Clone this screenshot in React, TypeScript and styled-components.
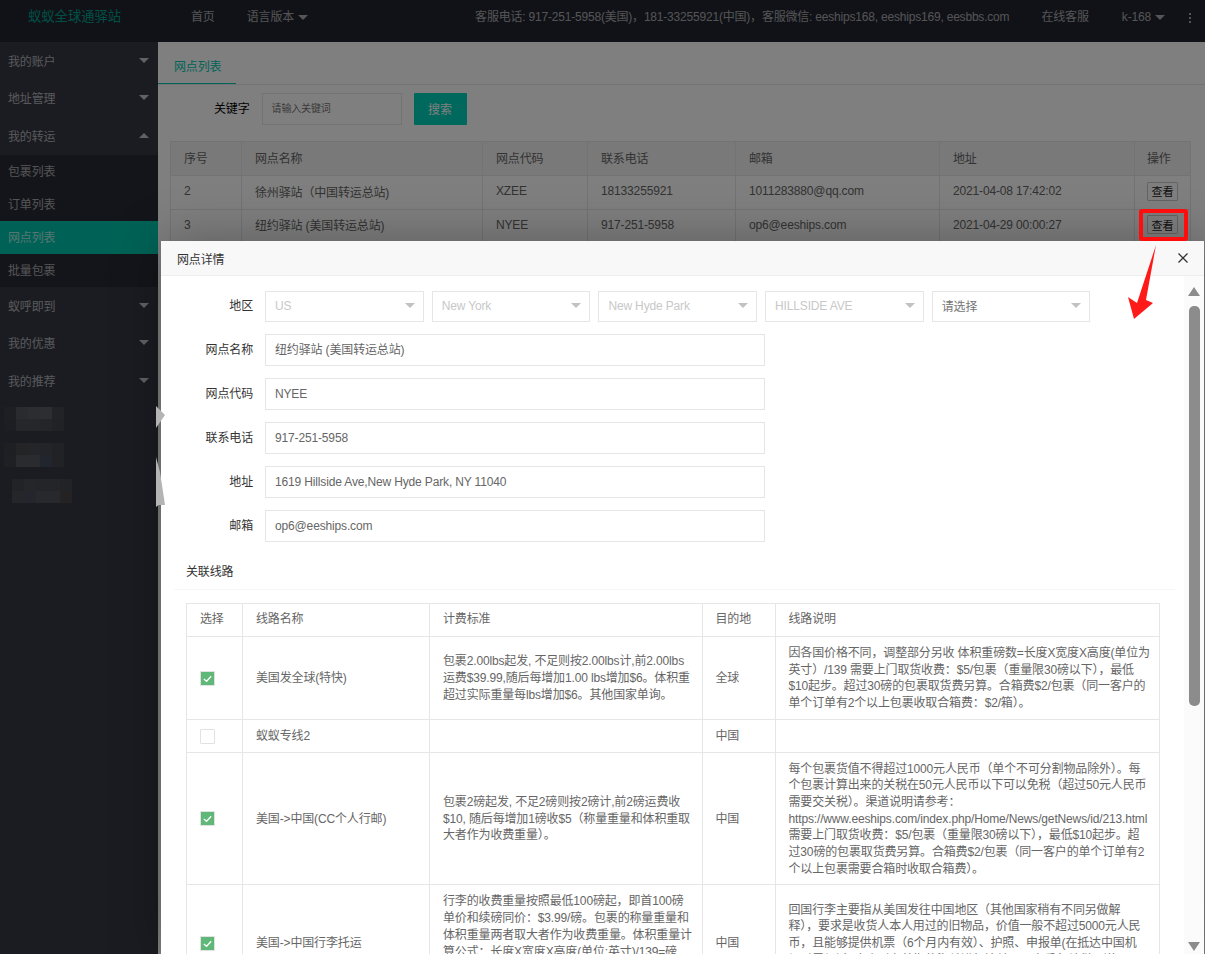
import React from "react";
import styled, { createGlobalStyle } from "styled-components";

const GlobalStyle = createGlobalStyle`
  html, body {
    margin: 0;
    padding: 0;
    background: #fff;
  }
  body {
    font-family: "Liberation Sans", "Noto Sans CJK SC", sans-serif;
    font-size: 12px;
    letter-spacing: -0.15px;
    color: #666;
  }
  * {
    box-sizing: border-box;
  }
`;

const Page = styled.div`
  position: relative;
  width: 1205px;
  height: 954px;
  overflow: hidden;
  background: #fff;
`;

const TopBar = styled.header`
  display: flex;
  align-items: flex-start;
  height: 42px;
  background: #22242e;
  color: #fff;
  line-height: 33px;
  white-space: nowrap;
`;

const Logo = styled.div`
  margin-left: 28px;
  width: 93px;
  font-size: 13.3px;
  letter-spacing: 0;
  color: #00a08e;
`;

const NavLink = styled.a<{ $left?: number }>`
  display: flex;
  align-items: center;
  height: 34px;
  margin-left: ${(p) => p.$left ?? 0}px;
  color: rgba(255, 255, 255, 0.62);
`;

const ContactText = styled(NavLink)`
  letter-spacing: -0.2px;
`;

const Caret = styled.i<{ $up?: boolean; $light?: boolean }>`
  display: inline-block;
  width: 0;
  height: 0;
  margin-left: 4px;
  border-left: 5px solid transparent;
  border-right: 5px solid transparent;
  ${(p) => (p.$up ? "border-bottom" : "border-top")}: 5px solid rgba(255, 255, 255, ${(p) => (p.$light ? 0.62 : 0.7)});
`;

const Dots = styled.div`
  display: flex;
  flex-direction: column;
  gap: 2px;
  margin: 13px 0 0 24px;
  i {
    width: 2px;
    height: 2px;
    background: rgba(255, 255, 255, 0.6);
  }
`;

const Layout = styled.div`
  display: flex;
  height: 912px;
`;

const Sidebar = styled.aside`
  width: 158px;
  flex: none;
  background: #373944;
  color: rgba(255, 255, 255, 0.62);
`;

const MenuItem = styled.div`
  display: flex;
  align-items: center;
  justify-content: space-between;
  height: 38px;
  padding: 0 9px 2px 8px;
  margin-bottom: -0.3px;
`;

const SubMenu = styled.div`
  background: #292a34;
`;

const SubItem = styled.div<{ $active?: boolean }>`
  display: flex;
  align-items: center;
  height: 33px;
  padding: 0 0 2px 8px;
  background: ${(p) => (p.$active ? "#00c4ac" : "transparent")};
  color: ${(p) => (p.$active ? "rgba(255,255,255,.7)" : "rgba(255,255,255,.6)")};
`;

const MosaicGroup = styled.div`
  display: flex;
  flex-direction: column;
  gap: 12px;
  margin-top: 7px;
`;

const Mosaic = styled.div<{ $left: number }>`
  display: grid;
  grid-template-columns: repeat(5, 12px);
  grid-auto-rows: 12px;
  margin-left: ${(p) => p.$left}px;
`;

const Cell = styled.div<{ $c: string }>`
  background: ${(p) => p.$c};
`;

const Main = styled.main`
  flex: 1;
  min-width: 0;
`;

const TabBar = styled.div`
  display: flex;
  height: 43px;
  border-bottom: 1px solid #e6e6e6;
`;

const Tab = styled.div`
  width: 78px;
  height: 42px;
  padding-left: 16px;
  line-height: 50px;
  color: #00c8b0;
  border-bottom: 1px solid #00c8b0;
`;

const SearchRow = styled.div`
  display: flex;
  align-items: center;
  gap: 12px;
  margin-top: 8px;
  padding-left: 56px;
`;

const SearchLabel = styled.label`
  padding-bottom: 3px;
  color: #000;
`;

const SearchInput = styled.div`
  width: 140px;
  height: 32px;
  padding-left: 9px;
  border: 1px solid #e6e6e6;
  background: #fff;
  font-size: 10px;
  line-height: 29px;
  color: #757575;
`;

const SearchButton = styled.button`
  width: 53px;
  height: 32px;
  padding: 0 0 2px;
  border: 0;
  border-radius: 1px;
  background: #00d0b8;
  color: #fff;
  font: inherit;
`;

const SiteTable = styled.table`
  width: 1020px;
  margin: 16px 0 0 12px;
  border-collapse: collapse;
  table-layout: fixed;
  color: #666;
  th,
  td {
    height: 33.5px;
    padding: 0 13px 2px;
    border: 1px solid #e6e6e6;
    text-align: left;
    font-weight: 400;
    white-space: nowrap;
  }
  th {
    height: 34px;
    background: #f2f2f2;
  }
  td:last-child,
  th:last-child {
    padding-left: 12px;
  }
`;

const ViewButton = styled.button`
  display: block;
  width: 31px;
  height: 19px;
  padding: 0;
  border: 1px solid #c9c9c9;
  border-radius: 1px;
  background: #fff;
  color: #222;
  font: inherit;
  font-size: 11px;
`;

const Overlay = styled.div`
  position: absolute;
  inset: 0;
  background: rgba(0, 0, 0, 0.5);
`;

const Modal = styled.section`
  position: absolute;
  left: 161px;
  top: 241px;
  right: 1px;
  bottom: 0;
  display: flex;
  flex-direction: column;
  overflow: hidden;
  background: #fff;
  box-shadow: 1px 1px 50px rgba(0, 0, 0, 0.3);
`;

const ModalHead = styled.div`
  display: flex;
  align-items: center;
  justify-content: space-between;
  flex: none;
  height: 35px;
  padding: 0 15px 0 16px;
  background: #f8f8f8;
  border-bottom: 1px solid #eee;
  color: #333;
`;

const CloseIcon = styled.svg`
  width: 12px;
  height: 12px;
  stroke: #333;
  stroke-width: 1.3;
  fill: none;
`;

const ModalBody = styled.div`
  display: flex;
  flex: 1;
  min-height: 0;
`;

const ModalContent = styled.div`
  flex: 1;
  min-width: 0;
  overflow: hidden;
  padding-top: 14px;
`;

const FormRow = styled.div`
  display: flex;
  align-items: center;
  height: 32px;
  margin-bottom: 12px;
`;

const FormLabel = styled.label`
  width: 92px;
  margin-right: 12px;
  padding-bottom: 3px;
  text-align: right;
  color: #333;
`;

const TextField = styled.div`
  width: 500px;
  height: 32px;
  padding-left: 9px;
  border: 1px solid #e6e6e6;
  line-height: 30px;
  color: #666;
  white-space: nowrap;
`;

const SelectGroup = styled.div`
  display: flex;
  gap: 8.2px;
`;

const SelectBox = styled.div<{ $disabled?: boolean }>`
  display: flex;
  align-items: center;
  justify-content: space-between;
  width: 158.5px;
  height: 31px;
  padding: 0 8px 1px 9px;
  border: 1px solid #e6e6e6;
  color: ${(p) => (p.$disabled ? "#c8c8c8" : "#757575")};
  white-space: nowrap;
`;

const SelectArrow = styled.i`
  width: 0;
  height: 0;
  border-left: 5px solid transparent;
  border-right: 5px solid transparent;
  border-top: 5px solid #c2c2c2;
`;

const SectionTitle = styled.div`
  width: 1001px;
  height: 29px;
  margin: 19px 0 0 13px;
  padding-left: 12px;
  border-bottom: 1px solid #f6f6f6;
  line-height: 23px;
  color: #333;
`;

const RouteTable = styled.table`
  width: 972.5px;
  margin: 13px 0 0 25px;
  border-collapse: collapse;
  table-layout: fixed;
  color: #666;
  line-height: 16.7px;
  th,
  td {
    padding: 8px 13px 7px;
    border: 1px solid #e6e6e6;
    text-align: left;
    font-weight: 400;
    vertical-align: middle;
    white-space: nowrap;
  }
  th {
    height: 33px;
    padding: 0 13px 1px;
  }
`;

const Check = styled.div<{ $on?: boolean }>`
  display: flex;
  align-items: center;
  justify-content: center;
  width: 15px;
  height: 15px;
  border: 1px solid #e2e2e2;
  border-radius: 1px;
  background: ${(p) => (p.$on ? "#5fb878" : "#fff")};
  svg {
    width: 11px;
    height: 11px;
    fill: none;
    stroke: #fff;
    stroke-width: 1.4;
  }
`;

const Scrollbar = styled.div`
  display: flex;
  flex-direction: column;
  align-items: center;
  flex: none;
  width: 20px;
  padding-top: 11px;
  background: #fbfbfb;
`;

const ScrollArrow = styled.i<{ $down?: boolean }>`
  flex: none;
  width: 0;
  height: 0;
  border-left: 6px solid transparent;
  border-right: 6px solid transparent;
  ${(p) => (p.$down ? "border-top" : "border-bottom")}: 9px solid #8c8c8c;
  margin-top: ${(p) => (p.$down ? "auto" : "0")};
  margin-bottom: ${(p) => (p.$down ? "3px" : "0")};
`;

const ScrollThumb = styled.div`
  flex: none;
  width: 11px;
  height: 400px;
  margin-top: 10px;
  border-radius: 5px;
  background: #8c8c8c;
`;

const Highlight = styled.div`
  position: absolute;
  left: 1139px;
  top: 209px;
  width: 49px;
  height: 32px;
  border: 4px solid #ff0d0d;
  border-radius: 3px;
`;

const Annotation = styled.svg`
  position: absolute;
  left: 0;
  top: 0;
  width: 1205px;
  height: 954px;
  pointer-events: none;
`;

const sites = [
  { id: "2", name: "徐州驿站（中国转运总站)", code: "XZEE", tel: "18133255921", mail: "1011283880@qq.com", time: "2021-04-08 17:42:02" },
  { id: "3", name: "纽约驿站 (美国转运总站)", code: "NYEE", tel: "917-251-5958", mail: "op6@eeships.com", time: "2021-04-29 00:00:27" },
];

const fields = [
  ["网点名称", "纽约驿站 (美国转运总站)"],
  ["网点代码", "NYEE"],
  ["联系电话", "917-251-5958"],
  ["地址", "1619 Hillside Ave,New Hyde Park, NY 11040"],
  ["邮箱", "op6@eeships.com"],
];

const routes = [
  {
    on: true,
    name: "美国发全球(特快)",
    fee: ["包裹2.00lbs起发, 不足则按2.00lbs计,前2.00lbs", "运费$39.99,随后每增加1.00 lbs增加$6。体积重", "超过实际重量每lbs增加$6。其他国家单询。"],
    dest: "全球",
    desc: [
      "因各国价格不同，调整部分另收 体积重磅数=长度X宽度X高度(单位为",
      "英寸）/139 需要上门取货收费：$5/包裹（重量限30磅以下），最低",
      "$10起步。超过30磅的包裹取货费另算。合箱费$2/包裹（同一客户的",
      "单个订单有2个以上包裹收取合箱费：$2/箱）。",
    ],
  },
  { on: false, name: "蚁蚁专线2", fee: [], dest: "中国", desc: [] },
  {
    on: true,
    name: "美国->中国(CC个人行邮)",
    fee: ["包裹2磅起发, 不足2磅则按2磅计,前2磅运费收", "$10, 随后每增加1磅收$5（称量重量和体积重取", "大者作为收费重量）。"],
    dest: "中国",
    desc: [
      "每个包裹货值不得超过1000元人民币（单个不可分割物品除外）。每",
      "个包裹计算出来的关税在50元人民币以下可以免税（超过50元人民币",
      "需要交关税）。渠道说明请参考：",
      "https://www.eeships.com/index.php/Home/News/getNews/id/213.html",
      "需要上门取货收费：$5/包裹（重量限30磅以下），最低$10起步。超",
      "过30磅的包裹取货费另算。合箱费$2/包裹（同一客户的单个订单有2",
      "个以上包裹需要合箱时收取合箱费）。",
    ],
  },
  {
    on: true,
    name: "美国->中国行李托运",
    fee: [
      "行李的收费重量按照最低100磅起，即首100磅",
      "单价和续磅同价：$3.99/磅。包裹的称量重量和",
      "体积重量两者取大者作为收费重量。体积重量计",
      "算公式：长度X宽度X高度(单位:英寸)/139=磅",
      "需要上门取货收费：$5/包裹，最低$10起步。",
      "超过30磅的包裹取货费另算。",
    ],
    dest: "中国",
    desc: [
      "回国行李主要指从美国发往中国地区（其他国家稍有不同另做解",
      "释），要求是收货人本人用过的旧物品，价值一般不超过5000元人民",
      "币，且能够提供机票（6个月内有效）、护照、申报单(在抵达中国机",
      "场时需经过2个小时有效期的海关进行清关即可享受免关税，详",
      "情请咨询客服。",
    ],
  },
];

const mosaics = [
  { left: 4, cells: ["#3c3e46", "#54565d", "#585a61", "#5a5c63", "#44464e", "#3a3c44", "#4c4e55", "#4c4e55", "#484a51", "#42444c"] },
  { left: 4, cells: ["#3d3f47", "#48494f", "#484a52", "#46484f", "#42444c", "#3f4149", "#55575d", "#55575d", "#434a5a", "#42444c"] },
  { left: 12, cells: ["#44464d", "#4a4c53", "#484a50", "#484a50", "#44464d", "#4a4c54", "#4a4d5b", "#50525a", "#50525a", "#4a4446"] },
];

const Lines = ({ items }: { items: string[] }) => (
  <>
    {items.map((line) => (
      <div key={line}>{line}</div>
    ))}
  </>
);

const App = () => {
  return (
    <Page>
      <GlobalStyle />
      <TopBar>
        <Logo>蚁蚁全球通驿站</Logo>
        <NavLink $left={70}>首页</NavLink>
        <NavLink $left={32}>
          语言版本
          <Caret $light />
        </NavLink>
        <ContactText $left={167}>
          客服电话: 917-251-5958(美国)，181-33255921(中国)，客服微信: eeships168, eeships169, eesbbs.com
        </ContactText>
        <NavLink $left={32}>在线客服</NavLink>
        <NavLink $left={33}>
          k-168
          <Caret $light />
        </NavLink>
        <Dots>
          <i />
          <i />
          <i />
        </Dots>
      </TopBar>
      <Layout>
        <Sidebar>
          <MenuItem>
            我的账户
            <Caret />
          </MenuItem>
          <MenuItem>
            地址管理
            <Caret />
          </MenuItem>
          <MenuItem>
            我的转运
            <Caret $up />
          </MenuItem>
          <SubMenu>
            <SubItem>包裹列表</SubItem>
            <SubItem>订单列表</SubItem>
            <SubItem $active>网点列表</SubItem>
            <SubItem>批量包裹</SubItem>
          </SubMenu>
          <MenuItem>
            蚁呼即到
            <Caret />
          </MenuItem>
          <MenuItem>
            我的优惠
            <Caret />
          </MenuItem>
          <MenuItem>
            我的推荐
            <Caret />
          </MenuItem>
          <MosaicGroup>
            {mosaics.map((m) => (
              <Mosaic key={m.cells.join()} $left={m.left}>
                {m.cells.map((c, i) => (
                  <Cell key={i} $c={c} />
                ))}
              </Mosaic>
            ))}
          </MosaicGroup>
        </Sidebar>
        <Main>
          <TabBar>
            <Tab>网点列表</Tab>
          </TabBar>
          <SearchRow>
            <SearchLabel>关键字</SearchLabel>
            <SearchInput>请输入关键词</SearchInput>
            <SearchButton>搜索</SearchButton>
          </SearchRow>
          <SiteTable>
            <colgroup>
              <col style={{ width: 71 }} />
              <col style={{ width: 241 }} />
              <col style={{ width: 105 }} />
              <col style={{ width: 148 }} />
              <col style={{ width: 204 }} />
              <col style={{ width: 195 }} />
              <col style={{ width: 56 }} />
            </colgroup>
            <thead>
              <tr>
                <th>序号</th>
                <th>网点名称</th>
                <th>网点代码</th>
                <th>联系电话</th>
                <th>邮箱</th>
                <th>地址</th>
                <th>操作</th>
              </tr>
            </thead>
            <tbody>
              {sites.map((s) => (
                <tr key={s.id}>
                  <td>{s.id}</td>
                  <td>{s.name}</td>
                  <td>{s.code}</td>
                  <td>{s.tel}</td>
                  <td>{s.mail}</td>
                  <td>{s.time}</td>
                  <td>
                    <ViewButton>查看</ViewButton>
                  </td>
                </tr>
              ))}
            </tbody>
          </SiteTable>
        </Main>
      </Layout>
      <Overlay />
      <Modal>
        <ModalHead>
          网点详情
          <CloseIcon viewBox="0 0 12 12">
            <path d="M1.5 1.5l9 9M10.5 1.5l-9 9" />
          </CloseIcon>
        </ModalHead>
        <ModalBody>
          <ModalContent>
            <FormRow>
              <FormLabel>地区</FormLabel>
              <SelectGroup>
                <SelectBox $disabled>
                  US
                  <SelectArrow />
                </SelectBox>
                <SelectBox $disabled>
                  New York
                  <SelectArrow />
                </SelectBox>
                <SelectBox $disabled>
                  New Hyde Park
                  <SelectArrow />
                </SelectBox>
                <SelectBox $disabled>
                  HILLSIDE AVE
                  <SelectArrow />
                </SelectBox>
                <SelectBox>
                  请选择
                  <SelectArrow />
                </SelectBox>
              </SelectGroup>
            </FormRow>
            {fields.map(([label, value]) => (
              <FormRow key={label}>
                <FormLabel>{label}</FormLabel>
                <TextField>{value}</TextField>
              </FormRow>
            ))}
            <SectionTitle>关联线路</SectionTitle>
            <RouteTable>
              <colgroup>
                <col style={{ width: 56 }} />
                <col style={{ width: 187 }} />
                <col style={{ width: 272.5 }} />
                <col style={{ width: 73 }} />
                <col style={{ width: 384 }} />
              </colgroup>
              <thead>
                <tr>
                  <th>选择</th>
                  <th>线路名称</th>
                  <th>计费标准</th>
                  <th>目的地</th>
                  <th>线路说明</th>
                </tr>
              </thead>
              <tbody>
                {routes.map((r) => (
                  <tr key={r.name}>
                    <td>
                      <Check $on={r.on}>
                        {r.on && (
                          <svg viewBox="0 0 12 12">
                            <path d="M2 6.5l3 2.5 5-5.5" />
                          </svg>
                        )}
                      </Check>
                    </td>
                    <td>{r.name}</td>
                    <td>
                      <Lines items={r.fee} />
                    </td>
                    <td>{r.dest}</td>
                    <td>
                      <Lines items={r.desc} />
                    </td>
                  </tr>
                ))}
              </tbody>
            </RouteTable>
          </ModalContent>
          <Scrollbar>
            <ScrollArrow />
            <ScrollThumb />
            <ScrollArrow $down />
          </Scrollbar>
        </ModalBody>
      </Modal>
      <Highlight />
      <Annotation viewBox="0 0 1205 954">
        <polygon points="1156,245 1146,300 1153,303 1134,319 1128,297 1137,303" fill="#ff1a1a" />
        <polygon points="156,406 165,415 156,428" fill="#b4b4b4" />
        <polygon points="156,457 160,472 165,505 156,505" fill="#b4b4b4" />
        <polygon points="156,500 160,504 156,507" fill="#b4b4b4" />
      </Annotation>
    </Page>
  );
};

export default App;
